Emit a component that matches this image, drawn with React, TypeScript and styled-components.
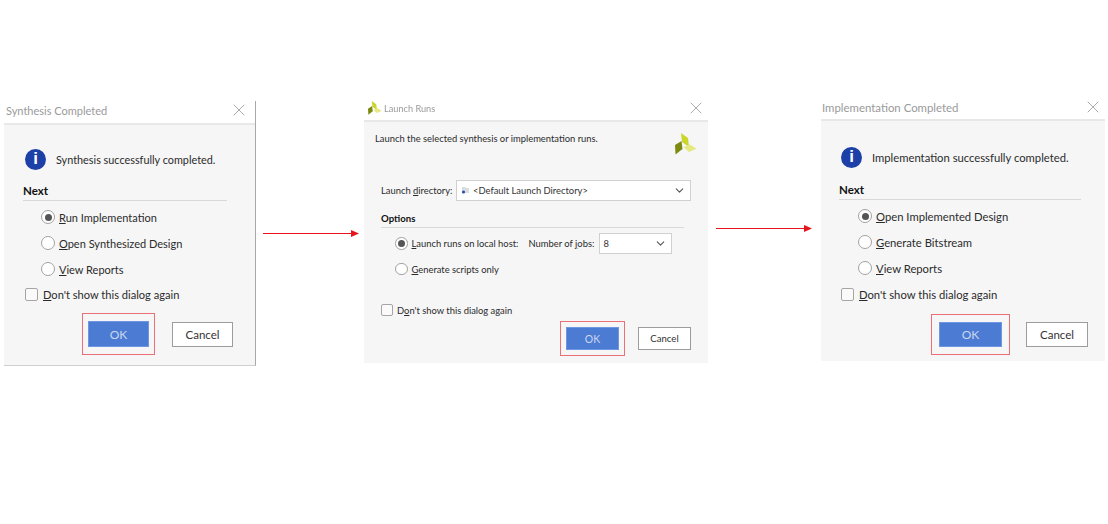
import React from "react";
import styled, { createGlobalStyle } from "styled-components";
import { ChevronDown, X } from "lucide-react";

const UI_FONT = `"Lato", "Noto Sans", "Liberation Sans", sans-serif`;

const GlobalStyle = createGlobalStyle`
  html, body { margin: 0; padding: 0; background: #fff; }
  body { font-family: ${UI_FONT}; color: #2b2b2b; }
`;

const Page = styled.div`
  width: 1108px;
  height: 524px;
  padding-left: 4px;
  box-sizing: border-box;
  display: flex;
  align-items: flex-start;
  overflow: hidden;
  filter: blur(0.35px);
`;

const Frame = styled.div<{ $width: number; $height: number; $top: number; $left?: number; $edge?: boolean }>`
  width: ${(p) => p.$width}px;
  height: ${(p) => p.$height}px;
  margin-top: ${(p) => p.$top}px;
  margin-left: ${(p) => p.$left || 0}px;
  flex: none;
  box-sizing: border-box;
  display: flex;
  flex-direction: column;
  border-right: ${(p) => (p.$edge ? "1px solid #a8a8a8" : "none")};
  border-bottom: ${(p) => (p.$edge ? "1px solid #cfcfcf" : "none")};
`;

const TitleBar = styled.div<{ $padLeft: number; $padRight: number; $padBottom?: number }>`
  height: 24px;
  flex: none;
  box-sizing: border-box;
  display: flex;
  align-items: center;
  gap: 2px;
  padding: 0 ${(p) => p.$padRight}px ${(p) => p.$padBottom || 2}px ${(p) => p.$padLeft}px;
  background: #fff;
  border-bottom: 2px solid #e8e8e8;
`;

const Title = styled.span<{ $size?: number }>`
  font-size: ${(p) => p.$size || 11.4}px;
  color: #9a9a9a;
  flex: 1;
  white-space: nowrap;
`;

const Body = styled.div<{ $pad: number }>`
  flex: 1;
  background: #f6f6f6;
  display: flex;
  flex-direction: column;
  padding-left: ${(p) => p.$pad}px;
`;

const Message = styled.div<{ $top: number; $size: number }>`
  margin-top: ${(p) => p.$top}px;
  display: flex;
  align-items: center;
  gap: 10px;
  padding-left: 2px;
  font-size: ${(p) => p.$size}px;
  height: 22px;
  white-space: nowrap;
`;

const InfoBadge = styled.div`
  width: 21px;
  height: 21px;
  border-radius: 50%;
  background: #1c40a8;
  color: #fff;
  font: 700 17px "Liberation Sans", sans-serif;
  display: flex;
  align-items: center;
  justify-content: center;
  flex: none;
`;

const Section = styled.div<{ $top: number; $width: number; $left?: number; $size?: number; $lead?: number }>`
  margin-top: ${(p) => p.$top}px;
  margin-left: ${(p) => p.$left || 0}px;
  width: ${(p) => p.$width}px;
  height: 18px;
  box-sizing: border-box;
  border-bottom: 1px solid #d9d9d9;
  font-size: ${(p) => p.$size || 11.5}px;
  font-weight: 700;
  color: #111;
  line-height: ${(p) => p.$lead || 15}px;
`;

const Options = styled.div`
  margin-top: 3px;
  display: flex;
  flex-direction: column;
`;

const OptionRow = styled.label<{ $left: number; $height?: number; $size?: number }>`
  display: flex;
  align-items: center;
  gap: 4px;
  height: ${(p) => p.$height || 26}px;
  padding-left: ${(p) => p.$left}px;
  font-size: ${(p) => p.$size || 11.25}px;
  white-space: nowrap;
`;

const RadioDot = styled.span<{ $on?: boolean; $size?: number }>`
  width: ${(p) => p.$size || 14}px;
  height: ${(p) => p.$size || 14}px;
  flex: none;
  box-sizing: border-box;
  border-radius: 50%;
  border: 1.5px solid #a2a2a2;
  background: #fff;
  display: flex;
  align-items: center;
  justify-content: center;
  &::after {
    content: "";
    display: ${(p) => (p.$on ? "block" : "none")};
    width: 7px;
    height: 7px;
    border-radius: 50%;
    background: #555;
  }
`;

const CheckRow = styled.label<{ $top: number; $left: number; $gap: number; $size?: number }>`
  display: flex;
  align-items: center;
  gap: ${(p) => p.$gap}px;
  margin-top: ${(p) => p.$top}px;
  padding-left: ${(p) => p.$left}px;
  height: 14px;
  font-size: ${(p) => p.$size || 11.25}px;
  white-space: nowrap;
`;

const CheckBox = styled.span<{ $size: number }>`
  width: ${(p) => p.$size}px;
  height: ${(p) => p.$size}px;
  flex: none;
  box-sizing: border-box;
  border: 1.5px solid #a5a5a5;
  border-radius: 2px;
  background: #fafafa;
`;

const Footer = styled.div<{ $top: number; $left: number; $gap: number }>`
  margin-top: ${(p) => p.$top}px;
  padding-left: ${(p) => p.$left}px;
  display: flex;
  align-items: center;
  gap: ${(p) => p.$gap}px;
`;

const Highlight = styled.div<{ $x: number; $y: number }>`
  padding: ${(p) => p.$y}px ${(p) => p.$x}px;
  border: 1px solid #ea6f76;
  display: flex;
`;

const OkButton = styled.button<{ $width: number; $height: number; $size?: number }>`
  width: ${(p) => p.$width}px;
  height: ${(p) => p.$height}px;
  border: 1px solid #6f96e0;
  background: #4c7bd3;
  color: #c9d6ef;
  font: ${(p) => p.$size || 12}px ${UI_FONT};
  padding: 0;
`;

const CancelButton = styled.button<{ $width: number; $height: number; $size?: number }>`
  width: ${(p) => p.$width}px;
  height: ${(p) => p.$height}px;
  border: 1.5px solid #9c9c9c;
  background: #fff;
  color: #333;
  font: ${(p) => p.$size || 11.5}px ${UI_FONT};
  padding: 0;
`;

const Arrow = styled.svg<{ $top: number; $left: number }>`
  flex: none;
  margin-top: ${(p) => p.$top}px;
  margin-left: ${(p) => p.$left}px;
`;

const Intro = styled.div`
  margin-top: 11px;
  font-size: 9.4px;
  display: flex;
  justify-content: space-between;
  padding-right: 11px;
  height: 24px;
  white-space: nowrap;
`;

const FieldRow = styled.div`
  margin-top: 23px;
  display: flex;
  align-items: center;
  padding-left: 6px;
  font-size: 9.4px;
  white-space: nowrap;
`;

const FieldLabel = styled.span<{ $width: number }>`
  width: ${(p) => p.$width}px;
  flex: none;
`;

const Dropdown = styled.div<{ $width: number }>`
  width: ${(p) => p.$width}px;
  height: 21px;
  flex: none;
  box-sizing: border-box;
  border: 1px solid #d0d0d0;
  background: #fff;
  display: flex;
  align-items: center;
  gap: 3px;
  padding: 0 4px;
  font-size: 9.4px;
  color: #333;
  span { flex: 1; }
`;

const ArrowLine = ({ top, left }: { top: number; left: number }) => (
  <Arrow $top={top} $left={left} width="96" height="9" viewBox="0 0 96 9">
    <path d="M0 4.5H88" stroke="#e8141c" strokeWidth="1" />
    <path d="M88 1L96 4.5L88 8Z" fill="#e8141c" />
  </Arrow>
);

const Logo = ({ size }: { size: number }) => (
  <svg width={size} height={size} viewBox="0 0 22 22">
    <path d="M6 0L13 5L14 14L7 9Z" fill="#ccd52c" />
    <path d="M8.5 14L15 11.5L21.5 15.7L14 19Z" fill="#e4e981" />
    <path d="M0 12L6.5 8L7.5 16L.5 21.5Z" fill="#7d8a12" />
  </svg>
);

const FolderGlyph = () => (
  <svg width="9" height="9" viewBox="0 0 9 9">
    <path d="M1 1H4L5 2H8V7H1Z" fill="#d8dce4" />
    <circle cx="2.5" cy="6" r="1.6" fill="#2d4f9e" />
  </svg>
);

const CloseIcon = () => <X size={20} color="#ababab" strokeWidth={1.2} />;

export default function App() {
  return (
    <>
      <GlobalStyle />
      <Page>
        <Frame $width={252} $height={265} $top={101} $edge>
          <TitleBar $padLeft={2} $padRight={6} $padBottom={4}>
            <Title $size={11}>Synthesis Completed</Title>
            <CloseIcon />
          </TitleBar>
          <Body $pad={19}>
            <Message $top={23} $size={10.85}>
              <InfoBadge>i</InfoBadge>
              Synthesis successfully completed.
            </Message>
            <Section $top={13} $width={204}>Next</Section>
            <Options>
              <OptionRow $left={18} $size={11}>
                <RadioDot $on />
                <span><u>R</u>un Implementation</span>
              </OptionRow>
              <OptionRow $left={18} $size={11}>
                <RadioDot />
                <span><u>O</u>pen Synthesized Design</span>
              </OptionRow>
              <OptionRow $left={18} $size={11}>
                <RadioDot />
                <span><u>V</u>iew Reports</span>
              </OptionRow>
            </Options>
            <CheckRow $top={5} $left={2} $gap={5} $size={11.1}>
              <CheckBox $size={13} />
              <span><u>D</u>on't show this dialog again</span>
            </CheckRow>
            <Footer $top={12} $left={59} $gap={17}>
              <Highlight $x={5} $y={7}>
                <OkButton $width={61} $height={26}>OK</OkButton>
              </Highlight>
              <CancelButton $width={61} $height={25}>Cancel</CancelButton>
            </Footer>
          </Body>
        </Frame>

        <ArrowLine top={229} left={7} />

        <Frame $width={344} $height={265} $top={98} $left={5}>
          <TitleBar $padLeft={4} $padRight={2}>
            <Logo size={14} />
            <Title $size={9.2}>Launch Runs</Title>
            <CloseIcon />
          </TitleBar>
          <Body $pad={11}>
            <Intro>
              Launch the selected synthesis or implementation runs.
              <Logo size={22} />
            </Intro>
            <FieldRow>
              <FieldLabel $width={75}>Launch <u>d</u>irectory:</FieldLabel>
              <Dropdown $width={235}>
                <FolderGlyph />
                <span>&lt;Default Launch Directory&gt;</span>
                <ChevronDown size={13} color="#555" />
              </Dropdown>
            </FieldRow>
            <Section $top={9} $width={303} $left={6} $size={9.6} $lead={18}>Options</Section>
            <OptionRow $left={20} $height={31} $size={9.4}>
              <RadioDot $on $size={12.5} />
              <FieldLabel $width={113}><u>L</u>aunch runs on local host:</FieldLabel>
              <FieldLabel $width={66}>Number of <u>j</u>obs:</FieldLabel>
              <Dropdown $width={73}>
                <span>8</span>
                <ChevronDown size={13} color="#555" />
              </Dropdown>
            </OptionRow>
            <OptionRow $left={20} $height={20} $size={9.4}>
              <RadioDot $size={12.5} />
              <span><u>G</u>enerate scripts only</span>
            </OptionRow>
            <CheckRow $top={24} $left={6} $gap={4} $size={9.4}>
              <CheckBox $size={12} />
              <span>D<u>o</u>n't show this dialog again</span>
            </CheckRow>
            <Footer $top={4} $left={185} $gap={13}>
              <Highlight $x={5} $y={5}>
                <OkButton $width={53} $height={23} $size={10.5}>OK</OkButton>
              </Highlight>
              <CancelButton $width={53} $height={23} $size={9.6}>Cancel</CancelButton>
            </Footer>
          </Body>
        </Frame>

        <ArrowLine top={224} left={8} />

        <Frame $width={284} $height={264} $top={97} $left={9}>
          <TitleBar $padLeft={1} $padRight={2}>
            <Title>Implementation Completed</Title>
            <CloseIcon />
          </TitleBar>
          <Body $pad={18}>
            <Message $top={25} $size={11.25}>
              <InfoBadge>i</InfoBadge>
              Implementation successfully completed.
            </Message>
            <Section $top={14} $width={242}>Next</Section>
            <Options>
              <OptionRow $left={19}>
                <RadioDot $on />
                <span><u>O</u>pen Implemented Design</span>
              </OptionRow>
              <OptionRow $left={19}>
                <RadioDot />
                <span><u>G</u>enerate Bitstream</span>
              </OptionRow>
              <OptionRow $left={19}>
                <RadioDot />
                <span><u>V</u>iew Reports</span>
              </OptionRow>
            </Options>
            <CheckRow $top={6} $left={2} $gap={5}>
              <CheckBox $size={13} />
              <span><u>D</u>on't show this dialog again</span>
            </CheckRow>
            <Footer $top={13} $left={92} $gap={16}>
              <Highlight $x={7} $y={7}>
                <OkButton $width={63} $height={25}>OK</OkButton>
              </Highlight>
              <CancelButton $width={62} $height={25}>Cancel</CancelButton>
            </Footer>
          </Body>
        </Frame>
      </Page>
    </>
  );
}
